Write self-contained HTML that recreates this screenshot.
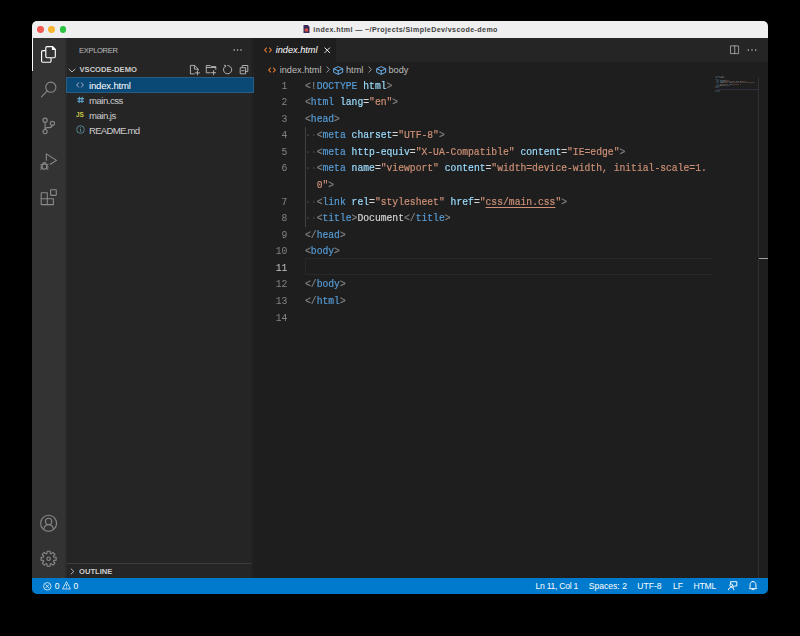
<!DOCTYPE html>
<html><head><meta charset="utf-8">
<style>
html,body{margin:0;padding:0;width:800px;height:636px;background:#000;overflow:hidden;}
*{box-sizing:border-box;}
.a{position:absolute;}
#win{position:absolute;left:0;top:0;width:800px;height:636px;clip-path:inset(21px 32px 42px 32px round 5px);background:#1e1e1e;}
.ui{position:absolute;font-family:"Liberation Sans",sans-serif;white-space:nowrap;line-height:1;}
.tl{position:absolute;width:6.9px;height:6.9px;border-radius:50%;top:26.4px;}
.ln{position:absolute;left:250px;width:42.4px;text-align:right;color:#858585;font-family:"Liberation Mono",monospace;font-size:11px;line-height:16.58px;height:16.58px;transform:scaleX(0.882);transform-origin:left top;}
.code{position:absolute;left:305.3px;color:#d4d4d4;font-family:"Liberation Mono",monospace;font-size:11px;line-height:16.58px;height:16.58px;white-space:pre;transform:scaleX(0.882);transform-origin:left top;-webkit-text-stroke:0.2px currentColor;}
.p{color:#808080}.t{color:#569cd6}.at{color:#9cdcfe}.s{color:#ce9178}.tx{color:#d4d4d4}
.ws{color:rgba(227,228,226,0.16)}
svg{position:absolute;overflow:visible;}
.ai{fill:none;stroke:#858585;stroke-width:1.5;stroke-linecap:round;stroke-linejoin:round;}
.si{fill:none;stroke:#c5c5c5;stroke-width:1.2;stroke-linecap:round;stroke-linejoin:round;}
.stt{fill:none;stroke:#ffffff;stroke-width:1.3;stroke-linecap:round;stroke-linejoin:round;}
</style></head>
<body>
<div id="win">
  <!-- title bar -->
  <div class="a" style="left:32px;top:21px;width:736px;height:17px;background:#efefef"></div>
  <div class="tl" style="left:36.8px;background:#f25a52"></div>
  <div class="tl" style="left:48.15px;background:#f6b630"></div>
  <div class="tl" style="left:59.6px;background:#29c440"></div>
  <svg style="left:303px;top:25px" width="7" height="8" viewBox="0 0 7 8"><path d="M0.5 0 H4.8 L6.5 1.8 V8 H0.5 Z" fill="#3b2a5a"/><circle cx="3.4" cy="5" r="1.8" fill="#e0503c"/></svg>
  <div class="ui" style="left:313.3px;top:26.6px;font-size:7.1px;letter-spacing:0.4px;font-weight:bold;color:#404040">index.html — ~/Projects/SimpleDev/vscode-demo</div>

  <!-- activity bar -->
  <div class="a" style="left:32px;top:38px;width:33px;height:540px;background:#333333"></div><div class="a" style="left:65px;top:38px;width:1.8px;height:540px;background:#2c2c2d"></div>
  <div class="a" style="left:32px;top:38px;width:1.4px;height:33.4px;background:#ffffff"></div>
  <!-- files icon -->
  <svg style="left:38px;top:44px" width="22" height="22" viewBox="38 44 22 22">
    <g fill="none" stroke="#ffffff" stroke-width="1.15" stroke-linejoin="round">
      <path d="M47 46.6 H52.6 L55.3 49.3 V56.5 A1.2 1.2 0 0 1 54.1 57.7 H47 A1.2 1.2 0 0 1 45.8 56.5 V47.8 A1.2 1.2 0 0 1 47 46.6 Z"/>
      <path d="M52.5 46.8 V49.4 H55.1 Z" fill="#ffffff"/>
      <path d="M45.6 50.6 H42.8 A1.2 1.2 0 0 0 41.6 51.8 V61 A1.2 1.2 0 0 0 42.8 62.2 H49.8 A1.2 1.2 0 0 0 51 61 V57.9"/>
    </g>
  </svg>
  <!-- inactive activity icons -->
  <svg style="left:36px;top:76px" width="26" height="500" viewBox="36 76 26 500">
    <g fill="none" stroke="#8a8a8a" stroke-width="1.1" stroke-linecap="round" stroke-linejoin="round">
      <circle cx="50.8" cy="87.2" r="5.1"/>
      <path d="M47.2 90.9 L41.5 96.8"/>
      <circle cx="45.1" cy="120.2" r="2.1"/>
      <circle cx="52.4" cy="123.3" r="2.1"/>
      <circle cx="45.1" cy="131.6" r="2.1"/>
      <path d="M45.1 122.3 V129.5"/>
      <path d="M52.3 125.4 C52 127 51 127.6 49.3 127.6 H47.3 C46 127.6 45.2 128.2 45.1 129.3"/>
      <path d="M46.3 160.3 V153.9 L56.5 160.4 L50.3 164.3"/>
      <path d="M42.6 164.4 A1.8 1.8 0 0 1 46.2 164.4"/>
      <ellipse cx="44.4" cy="166.6" rx="2.5" ry="2.6"/>
      <path d="M40.8 164.6 L42 165.3 M40.6 167 H41.9 M40.9 169.3 L42.1 168.5 M48 164.6 L46.8 165.3 M48.2 167 H46.9 M47.9 169.3 L46.7 168.5"/>
      <path d="M41.2 192.7 H47.3 V198.8 H53.4 V204.6 H41.2 Z"/>
      <path d="M41.2 198.8 H47.3 V204.6"/>
      <rect x="50.6" y="189.7" width="5.7" height="5.7" rx="0.6"/>
      <circle cx="48.6" cy="523.2" r="8"/>
      <circle cx="48.6" cy="521.4" r="3.1"/>
      <path d="M43.9 528.7 C44.3 526 46.3 524.7 48.6 524.7 C50.9 524.7 52.9 526 53.3 528.7"/>
      <path d="M46.99 553.49 L47.13 551.19 L50.07 551.19 L50.21 553.49 L51.18 553.89 L52.91 552.37 L54.98 554.44 L53.46 556.17 L53.86 557.14 L56.16 557.28 L56.16 560.22 L53.86 560.36 L53.46 561.33 L54.98 563.06 L52.91 565.13 L51.18 563.61 L50.21 564.01 L50.07 566.31 L47.13 566.31 L46.99 564.01 L46.02 563.61 L44.29 565.13 L42.22 563.06 L43.74 561.33 L43.34 560.36 L41.04 560.22 L41.04 557.28 L43.34 557.14 L43.74 556.17 L42.22 554.44 L44.29 552.37 L46.02 553.89 Z"/>
      <circle cx="48.6" cy="558.75" r="1.7"/>
    </g>
  </svg>
  <!-- sidebar -->
  <div class="a" style="left:66.8px;top:38px;width:185.7px;height:540px;background:#252526"></div><div class="a" style="left:252.5px;top:38px;width:1.6px;height:540px;background:#222223"></div>
  <div class="ui" style="left:79px;top:47px;font-size:7.6px;letter-spacing:-0.35px;color:#bbbbbb">EXPLORER</div>
  <svg style="left:233px;top:48.5px" width="10" height="2" viewBox="0 0 10 2"><g fill="#c5c5c5"><circle cx="1.2" cy="1" r="0.8"/><circle cx="4.6" cy="1" r="0.8"/><circle cx="8" cy="1" r="0.8"/></g></svg>
  <!-- chevron down -->
  <svg style="left:68.2px;top:68px" width="8" height="5" viewBox="0 0 8 5"><path d="M0.7 0.8 L4 4 L7.3 0.8" fill="none" stroke="#c5c5c5" stroke-width="0.9"/></svg>
  <div class="ui" style="left:79.5px;top:66px;font-size:7.6px;font-weight:bold;color:#cccccc">VSCODE-DEMO</div>
  <!-- explorer actions -->
  <svg style="left:186px;top:62px" width="66" height="16" viewBox="186 62 66 16">
    <g fill="none" stroke="#c5c5c5" stroke-width="0.85" stroke-linejoin="miter">
      <path d="M194.6 65.4 H190.4 V73.9 H194.6"/>
      <path d="M194.6 65.4 L198.2 69 V70.6"/>
      <path d="M194.4 65.6 V69.1 H198"/>
      <path d="M197.4 70.4 V75.4 M194.9 72.9 H199.9"/>
      <path d="M210.6 72.8 H206.3 V65.5 H210.2 L211.2 66.6 H215.8 V69.8"/>
      <path d="M206.3 67.5 H215.8"/>
      <path d="M213.6 70.2 V75.2 M211.1 72.7 H216.1"/>
      <path d="M224.9 66.6 A4.1 4.1 0 1 0 227.4 65.6"/>
      <path d="M223.9 65.4 L225.6 65.4 L225.6 67.2" />
      <path d="M242.3 67.5 V65.5 H247.8 V71.6 H245.7"/>
      <path d="M240.2 67.7 H245.6 V73.8 H240.2 Z"/>
      <path d="M241.3 70.7 H244.5"/>
    </g>
  </svg>
  <div class="a" style="left:65.5px;top:76.8px;width:188.5px;height:15.8px;background:#0a4876;border:0.8px solid #285e84"></div>
  <!-- file icons -->
  <svg style="left:76.2px;top:81.8px" width="8" height="6" viewBox="0 0 8 6"><path d="M2.8 0.6 L0.7 3 L2.8 5.4 M5.2 0.6 L7.3 3 L5.2 5.4" fill="none" stroke="#a8b3c0" stroke-width="1"/></svg>
  <div class="ui" style="left:89px;top:80.5px;font-size:9.6px;letter-spacing:-0.2px;color:#ffffff">index.html</div>
  <svg style="left:76px;top:96px" width="9" height="8" viewBox="76 96 9 8"><g fill="none" stroke="#5fa8d3" stroke-width="1.1"><path d="M77.3 98.6 H84 M77.3 101.2 H84 M79.5 96.7 L79.1 103 M82.2 96.7 L81.8 103"/></g></svg>
  <div class="ui" style="left:89px;top:95.8px;font-size:9.6px;letter-spacing:-0.5px;color:#cccccc">main.css</div>
  <div class="ui" style="left:76px;top:111.8px;font-size:6.4px;font-weight:bold;color:#cbcb41">JS</div>
  <div class="ui" style="left:89px;top:111px;font-size:9.6px;letter-spacing:-0.52px;color:#cccccc">main.js</div>
  <svg style="left:75.8px;top:125.3px" width="9" height="9" viewBox="0 0 16 16"><g fill="none" stroke="#5f9aa8" stroke-width="1.4"><circle cx="8" cy="8" r="6.8"/><path d="M8 6.5 V12 M8 3.7 V5"/></g></svg>
  <div class="ui" style="left:89px;top:126.3px;font-size:9.6px;letter-spacing:-0.75px;color:#cccccc">README.md</div>

  <div class="a" style="left:66.5px;top:562.8px;width:185px;height:0.8px;background:#3c3c3c"></div>
  <svg style="left:70px;top:568px" width="5" height="7" viewBox="0 0 5 7"><path d="M0.8 0.6 L3.8 3.5 L0.8 6.4" fill="none" stroke="#c5c5c5" stroke-width="0.9"/></svg>
  <div class="ui" style="left:79px;top:567.5px;font-size:7.6px;font-weight:bold;color:#cccccc">OUTLINE</div>

  <!-- tabs -->
  <div class="a" style="left:254px;top:38px;width:514px;height:24px;background:#252526"></div>
  <div class="a" style="left:254px;top:38px;width:82.3px;height:24px;background:#1e1e1e"></div>
  <svg style="left:263.5px;top:46.6px" width="8" height="6" viewBox="0 0 8 6"><path d="M2.8 0.6 L0.7 3 L2.8 5.4 M5.2 0.6 L7.3 3 L5.2 5.4" fill="none" stroke="#e37933" stroke-width="1.1"/></svg>
  <div class="ui" style="left:275.7px;top:46.4px;font-size:9.2px;font-style:italic;color:#ffffff">index.html</div>
  <svg style="left:324.3px;top:47.1px" width="6.5" height="6.5" viewBox="0 0 6.5 6.5"><path d="M0.6 0.6 L5.9 5.9 M5.9 0.6 L0.6 5.9" fill="none" stroke="#ffffff" stroke-width="0.9"/></svg>
  <!-- split / more -->
  <svg style="left:729.5px;top:45px" width="9.5" height="9.5" viewBox="0 0 16 16"><g class="si"><path d="M1.5 1.5 H14.5 V14.5 H1.5 Z M8 1.5 V14.5"/></g></svg>
  <svg style="left:747px;top:49.4px" width="10" height="2" viewBox="0 0 10 2"><g fill="#c5c5c5"><circle cx="1.3" cy="1" r="0.75"/><circle cx="5" cy="1" r="0.75"/><circle cx="8.7" cy="1" r="0.75"/></g></svg>

  <!-- breadcrumbs -->
  <svg style="left:267.5px;top:67px" width="8" height="6" viewBox="0 0 8 6"><path d="M2.8 0.6 L0.7 3 L2.8 5.4 M5.2 0.6 L7.3 3 L5.2 5.4" fill="none" stroke="#e37933" stroke-width="1.1"/></svg>
  <div class="ui" style="left:279.7px;top:65.5px;font-size:9.2px;color:#bcbcbc">index.html</div>
  <svg style="left:325.5px;top:66.3px" width="4" height="7" viewBox="0 0 4 7"><path d="M0.6 0.5 L3.4 3.5 L0.6 6.5" fill="none" stroke="#b0b0b0" stroke-width="0.8"/></svg>
  <svg style="left:333.2px;top:65.5px" width="10.4" height="9" viewBox="0 0 16 14"><g fill="none" stroke="#75beff" stroke-width="1.4" stroke-linejoin="round"><path d="M8 1 L15 4.2 V9.8 L8 13 L1 9.8 V4.2 Z"/><path d="M1 4.2 L8 7.4 L15 4.2 M8 7.4 V13"/></g></svg>
  <div class="ui" style="left:346px;top:65.5px;font-size:9.2px;color:#bcbcbc">html</div>
  <svg style="left:368px;top:66.3px" width="4" height="7" viewBox="0 0 4 7"><path d="M0.6 0.5 L3.4 3.5 L0.6 6.5" fill="none" stroke="#b0b0b0" stroke-width="0.8"/></svg>
  <svg style="left:375.8px;top:65.5px" width="10.4" height="9" viewBox="0 0 16 14"><g fill="none" stroke="#75beff" stroke-width="1.4" stroke-linejoin="round"><path d="M8 1 L15 4.2 V9.8 L8 13 L1 9.8 V4.2 Z"/><path d="M1 4.2 L8 7.4 L15 4.2 M8 7.4 V13"/></g></svg>
  <div class="ui" style="left:388.5px;top:65.5px;font-size:9.2px;color:#bcbcbc">body</div>

  <!-- editor -->
  <div id="editor"><div class="a" style="left:304.8px;top:258.4px;width:407.5px;height:16.9px;border:1px solid #282828;border-right:none"></div>
<div class="a" style="left:305.3px;top:127.24px;width:0.8px;height:99.48px;background:#404040"></div>
<div class="ln" style="top:77.50px;color:#858585">1</div>
<div class="code" style="top:77.50px"><span class="p">&lt;!</span><span class="t">DOCTYPE</span> <span class="at">html</span><span class="p">&gt;</span></div>
<div class="ln" style="top:94.08px;color:#858585">2</div>
<div class="code" style="top:94.08px"><span class="p">&lt;</span><span class="t">html</span> <span class="at">lang</span><span class="tx">=</span><span class="s">"en"</span><span class="p">&gt;</span></div>
<div class="ln" style="top:110.66px;color:#858585">3</div>
<div class="code" style="top:110.66px"><span class="p">&lt;</span><span class="t">head</span><span class="p">&gt;</span></div>
<div class="ln" style="top:127.24px;color:#858585">4</div>
<div class="code" style="top:127.24px"><span class="ws">··</span><span class="p">&lt;</span><span class="t">meta</span> <span class="at">charset</span><span class="tx">=</span><span class="s">"UTF-8"</span><span class="p">&gt;</span></div>
<div class="ln" style="top:143.82px;color:#858585">5</div>
<div class="code" style="top:143.82px"><span class="ws">··</span><span class="p">&lt;</span><span class="t">meta</span> <span class="at">http-equiv</span><span class="tx">=</span><span class="s">"X-UA-Compatible"</span> <span class="at">content</span><span class="tx">=</span><span class="s">"IE=edge"</span><span class="p">&gt;</span></div>
<div class="ln" style="top:160.40px;color:#858585">6</div>
<div class="code" style="top:160.40px"><span class="ws">··</span><span class="p">&lt;</span><span class="t">meta</span> <span class="at">name</span><span class="tx">=</span><span class="s">"viewport"</span> <span class="at">content</span><span class="tx">=</span><span class="s">"width=device-width, initial-scale=1.</span></div>
<div class="code" style="top:176.98px">  <span class="s">0"</span><span class="p">&gt;</span></div>
<div class="ln" style="top:193.56px;color:#858585">7</div>
<div class="code" style="top:193.56px"><span class="ws">··</span><span class="p">&lt;</span><span class="t">link</span> <span class="at">rel</span><span class="tx">=</span><span class="s">"stylesheet"</span> <span class="at">href</span><span class="tx">=</span><span class="s">"</span><span class="s" style="text-decoration:underline;text-underline-offset:2px">css/main.css</span><span class="s">"</span><span class="p">&gt;</span></div>
<div class="ln" style="top:210.14px;color:#858585">8</div>
<div class="code" style="top:210.14px"><span class="ws">··</span><span class="p">&lt;</span><span class="t">title</span><span class="p">&gt;</span><span class="tx">Document</span><span class="p">&lt;/</span><span class="t">title</span><span class="p">&gt;</span></div>
<div class="ln" style="top:226.72px;color:#858585">9</div>
<div class="code" style="top:226.72px"><span class="p">&lt;/</span><span class="t">head</span><span class="p">&gt;</span></div>
<div class="ln" style="top:243.30px;color:#858585">10</div>
<div class="code" style="top:243.30px"><span class="p">&lt;</span><span class="t">body</span><span class="p">&gt;</span></div>
<div class="ln" style="top:259.88px;color:#c6c6c6">11</div>
<div class="ln" style="top:276.46px;color:#858585">12</div>
<div class="code" style="top:276.46px"><span class="p">&lt;/</span><span class="t">body</span><span class="p">&gt;</span></div>
<div class="ln" style="top:293.04px;color:#858585">13</div>
<div class="code" style="top:293.04px"><span class="p">&lt;/</span><span class="t">html</span><span class="p">&gt;</span></div>
<div class="ln" style="top:309.62px;color:#858585">14</div></div><!--/editor-->

  <!-- minimap / overview ruler -->
  <div class="a" style="left:758px;top:77px;width:0.9px;height:501px;background:#303030"></div>
  <div class="a" style="left:758.8px;top:258px;width:9.2px;height:1.3px;background:#a0a0a0"></div>
  <div id="minimap" style="position:absolute;left:0;top:0;width:800px;height:636px;filter:blur(0.4px)"><div class="a" style="left:718px;top:88.8px;width:40px;height:1.5px;background:rgba(80,80,150,0.32)"></div>
<div class="a" style="left:715.30px;top:76.20px;width:1.10px;height:0.93px;background:rgba(128,128,128,0.24)"></div>
<div class="a" style="left:716.40px;top:76.20px;width:3.85px;height:0.93px;background:rgba(86,156,214,0.24)"></div>
<div class="a" style="left:720.80px;top:76.20px;width:2.20px;height:0.93px;background:rgba(156,220,254,0.24)"></div>
<div class="a" style="left:723.00px;top:76.20px;width:0.55px;height:0.93px;background:rgba(128,128,128,0.24)"></div>
<div class="a" style="left:715.30px;top:77.44px;width:0.55px;height:0.93px;background:rgba(128,128,128,0.24)"></div>
<div class="a" style="left:715.85px;top:77.44px;width:2.20px;height:0.93px;background:rgba(86,156,214,0.24)"></div>
<div class="a" style="left:718.60px;top:77.44px;width:2.20px;height:0.93px;background:rgba(156,220,254,0.24)"></div>
<div class="a" style="left:720.80px;top:77.44px;width:0.55px;height:0.93px;background:rgba(212,212,212,0.24)"></div>
<div class="a" style="left:721.35px;top:77.44px;width:2.20px;height:0.93px;background:rgba(206,145,120,0.24)"></div>
<div class="a" style="left:723.55px;top:77.44px;width:0.55px;height:0.93px;background:rgba(128,128,128,0.24)"></div>
<div class="a" style="left:715.30px;top:78.68px;width:0.55px;height:0.93px;background:rgba(128,128,128,0.24)"></div>
<div class="a" style="left:715.85px;top:78.68px;width:2.20px;height:0.93px;background:rgba(86,156,214,0.24)"></div>
<div class="a" style="left:718.05px;top:78.68px;width:0.55px;height:0.93px;background:rgba(128,128,128,0.24)"></div>
<div class="a" style="left:716.40px;top:79.92px;width:0.55px;height:0.93px;background:rgba(128,128,128,0.24)"></div>
<div class="a" style="left:716.95px;top:79.92px;width:2.20px;height:0.93px;background:rgba(86,156,214,0.24)"></div>
<div class="a" style="left:719.70px;top:79.92px;width:3.85px;height:0.93px;background:rgba(156,220,254,0.24)"></div>
<div class="a" style="left:723.55px;top:79.92px;width:0.55px;height:0.93px;background:rgba(212,212,212,0.24)"></div>
<div class="a" style="left:724.10px;top:79.92px;width:3.85px;height:0.93px;background:rgba(206,145,120,0.24)"></div>
<div class="a" style="left:727.95px;top:79.92px;width:0.55px;height:0.93px;background:rgba(128,128,128,0.24)"></div>
<div class="a" style="left:716.40px;top:81.16px;width:0.55px;height:0.93px;background:rgba(128,128,128,0.24)"></div>
<div class="a" style="left:716.95px;top:81.16px;width:2.20px;height:0.93px;background:rgba(86,156,214,0.24)"></div>
<div class="a" style="left:719.70px;top:81.16px;width:5.50px;height:0.93px;background:rgba(156,220,254,0.24)"></div>
<div class="a" style="left:725.20px;top:81.16px;width:0.55px;height:0.93px;background:rgba(212,212,212,0.24)"></div>
<div class="a" style="left:725.75px;top:81.16px;width:9.35px;height:0.93px;background:rgba(206,145,120,0.24)"></div>
<div class="a" style="left:735.65px;top:81.16px;width:3.85px;height:0.93px;background:rgba(156,220,254,0.24)"></div>
<div class="a" style="left:739.50px;top:81.16px;width:0.55px;height:0.93px;background:rgba(212,212,212,0.24)"></div>
<div class="a" style="left:740.05px;top:81.16px;width:4.95px;height:0.93px;background:rgba(206,145,120,0.24)"></div>
<div class="a" style="left:745.00px;top:81.16px;width:0.55px;height:0.93px;background:rgba(128,128,128,0.24)"></div>
<div class="a" style="left:716.40px;top:82.40px;width:0.55px;height:0.93px;background:rgba(128,128,128,0.24)"></div>
<div class="a" style="left:716.95px;top:82.40px;width:2.20px;height:0.93px;background:rgba(86,156,214,0.24)"></div>
<div class="a" style="left:719.70px;top:82.40px;width:2.20px;height:0.93px;background:rgba(156,220,254,0.24)"></div>
<div class="a" style="left:721.90px;top:82.40px;width:0.55px;height:0.93px;background:rgba(212,212,212,0.24)"></div>
<div class="a" style="left:722.45px;top:82.40px;width:5.50px;height:0.93px;background:rgba(206,145,120,0.24)"></div>
<div class="a" style="left:728.50px;top:82.40px;width:3.85px;height:0.93px;background:rgba(156,220,254,0.24)"></div>
<div class="a" style="left:732.35px;top:82.40px;width:0.55px;height:0.93px;background:rgba(212,212,212,0.24)"></div>
<div class="a" style="left:732.90px;top:82.40px;width:21.45px;height:0.93px;background:rgba(206,145,120,0.24)"></div>
<div class="a" style="left:754.35px;top:82.40px;width:0.55px;height:0.93px;background:rgba(128,128,128,0.24)"></div>
<div class="a" style="left:716.40px;top:83.64px;width:0.55px;height:0.93px;background:rgba(128,128,128,0.24)"></div>
<div class="a" style="left:716.95px;top:83.64px;width:2.20px;height:0.93px;background:rgba(86,156,214,0.24)"></div>
<div class="a" style="left:719.70px;top:83.64px;width:1.65px;height:0.93px;background:rgba(156,220,254,0.24)"></div>
<div class="a" style="left:721.35px;top:83.64px;width:0.55px;height:0.93px;background:rgba(212,212,212,0.24)"></div>
<div class="a" style="left:721.90px;top:83.64px;width:6.60px;height:0.93px;background:rgba(206,145,120,0.24)"></div>
<div class="a" style="left:729.05px;top:83.64px;width:2.20px;height:0.93px;background:rgba(156,220,254,0.24)"></div>
<div class="a" style="left:731.25px;top:83.64px;width:0.55px;height:0.93px;background:rgba(212,212,212,0.24)"></div>
<div class="a" style="left:731.80px;top:83.64px;width:7.70px;height:0.93px;background:rgba(206,145,120,0.24)"></div>
<div class="a" style="left:739.50px;top:83.64px;width:0.55px;height:0.93px;background:rgba(128,128,128,0.24)"></div>
<div class="a" style="left:716.40px;top:84.88px;width:0.55px;height:0.93px;background:rgba(128,128,128,0.24)"></div>
<div class="a" style="left:716.95px;top:84.88px;width:2.75px;height:0.93px;background:rgba(86,156,214,0.24)"></div>
<div class="a" style="left:719.70px;top:84.88px;width:0.55px;height:0.93px;background:rgba(128,128,128,0.24)"></div>
<div class="a" style="left:720.25px;top:84.88px;width:4.40px;height:0.93px;background:rgba(212,212,212,0.24)"></div>
<div class="a" style="left:724.65px;top:84.88px;width:1.10px;height:0.93px;background:rgba(128,128,128,0.24)"></div>
<div class="a" style="left:725.75px;top:84.88px;width:2.75px;height:0.93px;background:rgba(86,156,214,0.24)"></div>
<div class="a" style="left:728.50px;top:84.88px;width:0.55px;height:0.93px;background:rgba(128,128,128,0.24)"></div>
<div class="a" style="left:715.30px;top:86.12px;width:1.10px;height:0.93px;background:rgba(128,128,128,0.24)"></div>
<div class="a" style="left:716.40px;top:86.12px;width:2.20px;height:0.93px;background:rgba(86,156,214,0.24)"></div>
<div class="a" style="left:718.60px;top:86.12px;width:0.55px;height:0.93px;background:rgba(128,128,128,0.24)"></div>
<div class="a" style="left:715.30px;top:87.36px;width:0.55px;height:0.93px;background:rgba(128,128,128,0.24)"></div>
<div class="a" style="left:715.85px;top:87.36px;width:2.20px;height:0.93px;background:rgba(86,156,214,0.24)"></div>
<div class="a" style="left:718.05px;top:87.36px;width:0.55px;height:0.93px;background:rgba(128,128,128,0.24)"></div>
<div class="a" style="left:715.30px;top:89.84px;width:1.10px;height:0.93px;background:rgba(128,128,128,0.24)"></div>
<div class="a" style="left:716.40px;top:89.84px;width:2.20px;height:0.93px;background:rgba(86,156,214,0.24)"></div>
<div class="a" style="left:718.60px;top:89.84px;width:0.55px;height:0.93px;background:rgba(128,128,128,0.24)"></div>
<div class="a" style="left:715.30px;top:91.08px;width:1.10px;height:0.93px;background:rgba(128,128,128,0.24)"></div>
<div class="a" style="left:716.40px;top:91.08px;width:2.20px;height:0.93px;background:rgba(86,156,214,0.24)"></div>
<div class="a" style="left:718.60px;top:91.08px;width:0.55px;height:0.93px;background:rgba(128,128,128,0.24)"></div></div><!--/minimap-->
  <!-- status bar -->
  <div class="a" style="left:32px;top:578px;width:736px;height:16px;background:#007acc"></div>
  <svg style="left:42.9px;top:581.7px" width="8.6" height="8.6" viewBox="0 0 16 16"><g fill="none" stroke="#ffffff" stroke-width="1.4"><circle cx="8" cy="8" r="7"/><path d="M4.6 4.6 L11.4 11.4 M11.4 4.6 L4.6 11.4"/></g></svg>
  <div class="ui" style="left:54.7px;top:581.5px;font-size:8.6px;color:#ffffff">0</div>
  <svg style="left:62px;top:581.4px" width="9" height="8.6" viewBox="0 0 16 15"><g fill="none" stroke="#ffffff" stroke-width="1.3" stroke-linejoin="round"><path d="M8 1 L15 14 H1 Z"/><path d="M8 5.5 V9.5 M8 11 V12.3"/></g></svg>
  <div class="ui" style="left:73.5px;top:581.5px;font-size:8.6px;color:#ffffff">0</div>
  <div class="ui" style="left:535.6px;top:581.5px;font-size:8.6px;letter-spacing:-0.28px;color:#ffffff">Ln 11, Col 1</div>
  <div class="ui" style="left:588.7px;top:581.5px;font-size:8.6px;color:#ffffff">Spaces: 2</div>
  <div class="ui" style="left:637.2px;top:581.5px;font-size:8.6px;color:#ffffff">UTF-8</div>
  <div class="ui" style="left:673px;top:581.5px;font-size:8.6px;color:#ffffff">LF</div>
  <div class="ui" style="left:693.4px;top:581.5px;font-size:8.6px;letter-spacing:-0.2px;color:#ffffff">HTML</div>
  <svg style="left:724px;top:578px" width="38" height="16" viewBox="724 578 38 16"><g fill="none" stroke="#ffffff" stroke-width="0.95" stroke-linejoin="round" stroke-linecap="round">
    <path d="M730.5 583.6 V581.7 H736.8 V586 H734.8 L733.2 587.4 V586"/>
    <circle cx="731.2" cy="585.3" r="1.35"/>
    <path d="M728.5 589.8 C728.7 588.1 729.8 587.3 731.2 587.3 C732.6 587.3 733.7 588.1 733.9 589.8"/>
    <path d="M753 581.5 C750.9 581.5 750.1 583.1 750.1 584.8 V587.4 L749.3 588.6 H756.7 L755.9 587.4 V584.8 C755.9 583.1 755.1 581.5 753 581.5 Z"/>
    <path d="M752 589.6 H754"/>
  </g></svg>
</div>
</body></html>
